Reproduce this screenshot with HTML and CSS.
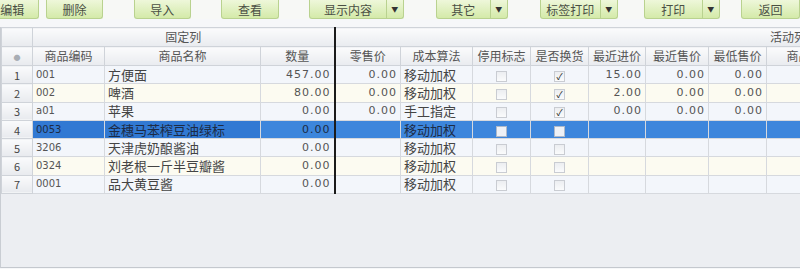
FILE: index.html
```html
<!DOCTYPE html>
<html lang="zh-CN">
<head>
  <meta charset="UTF-8">
  <title>商品资料</title>
  <link rel="stylesheet" href="styles.css">
</head>
<body>

<div class="toolbar">
  <div class="tool-btn btn-edit">编辑</div>
  <div class="tool-btn btn-del">删除</div>
  <div class="tool-btn btn-import">导入</div>
  <div class="tool-btn btn-view">查看</div>
  <div class="tool-btn split btn-show"><span class="label">显示内容</span><span class="drop">▼</span></div>
  <div class="tool-btn split btn-other"><span class="label">其它</span><span class="drop">▼</span></div>
  <div class="tool-btn split btn-tag"><span class="label">标签打印</span><span class="drop">▼</span></div>
  <div class="tool-btn split btn-print"><span class="label">打印</span><span class="drop">▼</span></div>
  <div class="tool-btn btn-back">返回</div>
</div>

<div class="grid-wrap">
  <table class="grid">
    <colgroup>
      <col style="width:31px">
      <col style="width:72px">
      <col style="width:156px">
      <col style="width:74px">
      <col style="width:66px">
      <col style="width:72px">
      <col style="width:58px">
      <col style="width:58px">
      <col style="width:57px">
      <col style="width:63px">
      <col style="width:58px">
      <col style="width:64px">
    </colgroup>
    <thead>
      <tr class="band">
        <th class="num-col"></th>
        <th colspan="3" class="fixed-end">固定列</th>
        <th colspan="8" class="active-band">活动列</th>
      </tr>
      <tr class="heads">
        <th class="num-col"><span class="dot">●</span></th>
        <th>商品编码</th>
        <th>商品名称</th>
        <th class="fixed-end">数量</th>
        <th>零售价</th>
        <th>成本算法</th>
        <th>停用标志</th>
        <th>是否换货</th>
        <th>最近进价</th>
        <th>最近售价</th>
        <th>最低售价</th>
        <th>商品</th>
      </tr>
    </thead>
    <tbody>
      <tr class="odd">
        <td class="num-col">1</td><td class="code">001</td><td>方便面</td><td class="n fixed-end">457.00</td><td class="n">0.00</td><td>移动加权</td>
        <td class="c"><span class="chk"></span></td><td class="c"><span class="chk on">✓</span></td>
        <td class="n">15.00</td><td class="n">0.00</td><td class="n">0.00</td><td></td>
      </tr>
      <tr class="even">
        <td class="num-col">2</td><td class="code">002</td><td>啤酒</td><td class="n fixed-end">80.00</td><td class="n">0.00</td><td>移动加权</td>
        <td class="c"><span class="chk"></span></td><td class="c"><span class="chk on">✓</span></td>
        <td class="n">2.00</td><td class="n">0.00</td><td class="n">0.00</td><td></td>
      </tr>
      <tr class="odd">
        <td class="num-col">3</td><td class="code">a01</td><td>苹果</td><td class="n fixed-end">0.00</td><td class="n">0.00</td><td>手工指定</td>
        <td class="c"><span class="chk"></span></td><td class="c"><span class="chk on">✓</span></td>
        <td class="n">0.00</td><td class="n">0.00</td><td class="n">0.00</td><td></td>
      </tr>
      <tr class="selected">
        <td class="num-col">4</td><td class="code focus">0053</td><td class="focus">金穗马苯榨豆油绿标</td><td class="n fixed-end">0.00</td><td></td><td>移动加权</td>
        <td class="c"><span class="chk"></span></td><td class="c"><span class="chk"></span></td>
        <td></td><td></td><td></td><td></td>
      </tr>
      <tr class="odd">
        <td class="num-col">5</td><td class="code">3206</td><td>天津虎奶酿酱油</td><td class="n fixed-end">0.00</td><td></td><td>移动加权</td>
        <td class="c"><span class="chk"></span></td><td class="c"><span class="chk"></span></td>
        <td></td><td></td><td></td><td></td>
      </tr>
      <tr class="even">
        <td class="num-col">6</td><td class="code">0324</td><td>刘老根一斤半豆瓣酱</td><td class="n fixed-end">0.00</td><td></td><td>移动加权</td>
        <td class="c"><span class="chk"></span></td><td class="c"><span class="chk"></span></td>
        <td></td><td></td><td></td><td></td>
      </tr>
      <tr class="odd">
        <td class="num-col">7</td><td class="code">0001</td><td>品大黄豆酱</td><td class="n fixed-end">0.00</td><td></td><td>移动加权</td>
        <td class="c"><span class="chk"></span></td><td class="c"><span class="chk"></span></td>
        <td></td><td></td><td></td><td></td>
      </tr>
    </tbody>
  </table>
</div>

</body>
</html>
```

FILE: styles.css
```css
body {
  margin: 0;
  width: 800px;
  height: 269px;
  overflow: hidden;
  background: #f6f7f9;
  font-family: "Noto Sans CJK SC", "Noto Sans", sans-serif;
  color: #333;
}
.toolbar {
  display: flex;
  height: 19px;
  background: #f7f8f6;
}
.tool-btn {
  box-sizing: border-box;
  height: 19px;
  display: flex;
  align-items: center;
  justify-content: center;
  font-size: 12px;
  color: #4a4f44;
  background: linear-gradient(#eef7da, #d4eaa9);
  border: 1px solid #b9d28f;
  border-top: none;
  border-radius: 0 0 3px 3px;
}
.tool-btn.split {
  justify-content: flex-start;
}
.tool-btn .label {
  flex: 1;
  text-align: center;
}
.tool-btn .drop {
  width: 16px;
  height: 100%;
  border-left: 1px solid #b9d28f;
  font-size: 7px;
  display: flex;
  align-items: center;
  justify-content: center;
  color: #333;
}
.btn-edit { width: 55px; margin-left: -15px; }
.btn-del { width: 57px; margin-left: 7px; }
.btn-import { width: 58px; margin-left: 31px; }
.btn-view { width: 59px; margin-left: 30px; }
.btn-show { width: 96px; margin-left: 30px; }
.btn-other { width: 73px; margin-left: 32px; }
.btn-tag { width: 79px; margin-left: 32px; }
.btn-print { width: 77px; margin-left: 26px; }
.btn-back { width: 60px; margin-left: 21px; }

.grid-wrap {
  margin-top: 8px;
  height: 240px;
  background: #eceef2;
  border-left: 1px solid #c9cdd3;
  border-bottom: 1px solid #c4c8ce;
  overflow: hidden;
}
.grid {
  border-collapse: collapse;
  table-layout: fixed;
  width: 830px;
  font-size: 12px;
}
.grid th {
  font-weight: normal;
  color: #555;
  background: linear-gradient(#fbfbfc, #e9ebef);
  border: 1px solid #cfd3d9;
  padding: 0;
  line-height: 16px;
  white-space: nowrap;
  overflow: hidden;
}
.band th {
  height: 18px;
}
.heads th {
  height: 17px;
}
.grid th.active-band {
  text-align: right;
  padding-right: 24px;
}
.grid td {
  height: 17.3px;
  padding: 0 3px;
  line-height: 16px;
  border: 1px solid #d6d9de;
  white-space: nowrap;
  overflow: hidden;
  color: #444;
  font-size: 13px;
}
.grid td.code {
  font-family: "DejaVu Sans", sans-serif;
  font-size: 10px;
  color: #555;
}
.grid td.n {
  text-align: right;
  font-family: "DejaVu Sans", sans-serif;
  font-size: 11px;
  letter-spacing: 1px;
  color: #555;
}
.grid td.c {
  text-align: center;
}
.grid .num-col {
  text-align: center;
  background: linear-gradient(#fafbfc, #e8eaee);
  border-color: #cfd3d9;
  color: #444;
  font-size: 11px;
  padding: 0;
}
.grid .fixed-end {
  border-right: 2px solid #1b1b1b;
}
.dot {
  font-size: 7px;
  color: #a8adb4;
}
.odd td {
  background: #f3f6fb;
}
.even td {
  background: #fcfbf1;
}
.selected td {
  background: #3d86dc;
  color: #1d2b45;
}
.selected td.focus {
  background: #3179d3;
}
.selected td.n,
.selected td.code {
  color: #1d2b45;
}
.chk {
  display: inline-block;
  box-sizing: border-box;
  width: 11px;
  height: 11px;
  border: 1px solid #c9ccd2;
  background: linear-gradient(#eceef1, #fafbfc);
  vertical-align: middle;
  font-size: 9px;
  line-height: 9px;
  color: #222;
  text-align: center;
}
.selected .chk {
  background: #eef1f6;
  border-color: #aeb9c9;
}
```
